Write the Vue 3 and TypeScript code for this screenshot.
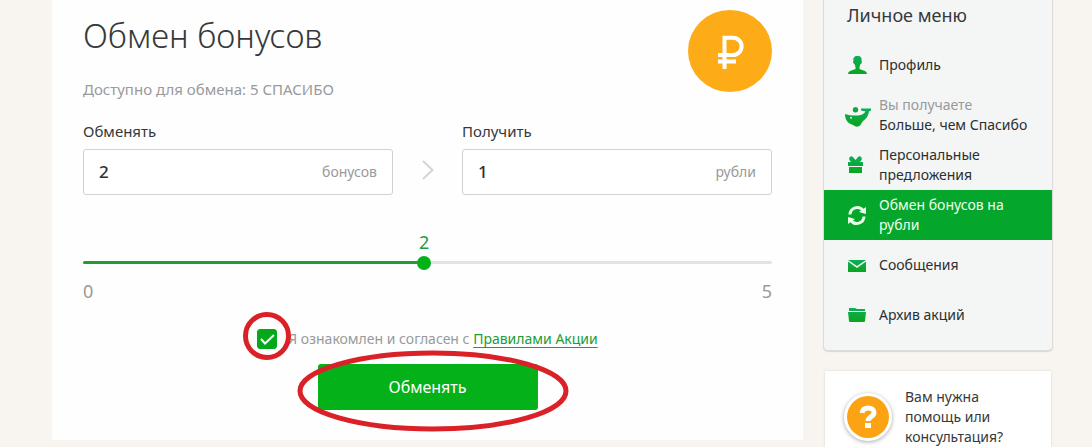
<script setup lang="ts">
import { computed, ref } from 'vue'

interface MenuItem {
  icon: 'profile' | 'whale' | 'gift' | 'exchange' | 'mail' | 'folder'
  label: string
  note?: string
  active?: boolean
}

const menu: MenuItem[] = [
  { icon: 'profile', label: 'Профиль' },
  { icon: 'whale', label: 'Больше, чем Спасибо', note: 'Вы получаете' },
  { icon: 'gift', label: 'Персональные предложения' },
  { icon: 'exchange', label: 'Обмен бонусов на рубли', active: true },
  { icon: 'mail', label: 'Сообщения' },
  { icon: 'folder', label: 'Архив акций' },
]

const available = 5
const position = ref(49.5)
const bonuses = computed(() => Math.floor((position.value / 100) * available))
const rubles = computed(() => Math.floor(bonuses.value / 2))
const agreed = ref(true)

const bubbleStyle = computed(() => ({ left: `${position.value}%` }))
const trackStyle = computed(() => ({
  background: `linear-gradient(to right, #219d35 ${position.value}%, #e3e3e3 ${position.value}%)`,
}))
</script>

<template>
  <div class="page">
    <main class="exchange">
      <header class="head">
        <div>
          <h1>Обмен бонусов</h1>
          <p class="available">Доступно для обмена: {{ available }} СПАСИБО</p>
        </div>
        <svg class="coin" viewBox="0 0 84 82" aria-hidden="true">
          <ellipse cx="42" cy="41" rx="42" ry="41" fill="#fdab17" />
          <path d="M36.500 59V27.700h8.500a8.300 8.300 0 0 1 0 17.300H30M30 51.500h18" fill="none" stroke="#fff" stroke-width="4" />
        </svg>
      </header>

      <form @submit.prevent>
        <div class="fields">
          <div class="field">
            <label for="give">Обменять</label>
            <div class="box">
              <input id="give" type="text" :value="bonuses" />
              <span>бонусов</span>
            </div>
          </div>
          <svg class="chevron" viewBox="0 0 12 20" aria-hidden="true">
            <path d="M1 1l9.500 9L1 19" fill="none" stroke="#d3d5d5" stroke-width="2" />
          </svg>
          <div class="field">
            <label for="receive">Получить</label>
            <div class="box">
              <input id="receive" type="text" :value="rubles" />
              <span>рубли</span>
            </div>
          </div>
        </div>

        <div class="slider">
          <div class="rail">
            <output class="bubble" for="amount" :style="bubbleStyle">{{ bonuses }}</output>
          </div>
          <input
            id="amount"
            v-model.number="position"
            type="range"
            min="0"
            max="100"
            step="0.5"
            aria-label="Количество бонусов"
            :style="trackStyle"
          />
          <div class="limits"><span>0</span><span>{{ available }}</span></div>
        </div>

        <div class="consent">
          <span class="tick">
            <input id="agree" v-model="agreed" type="checkbox" />
            <svg v-if="agreed" class="check" viewBox="0 0 20 20" aria-hidden="true">
              <path d="M4 10l4 4.500 9-8.500" fill="none" stroke="#fff" stroke-width="2" />
            </svg>
            <svg class="ring" viewBox="0 0 50 50" aria-hidden="true">
              <circle cx="25" cy="25" r="21.500" fill="none" stroke="#da2128" stroke-width="5" />
            </svg>
          </span>
          <span><label for="agree">Я ознакомлен и согласен с</label> <a href="#rules">Правилами Акции</a></span>
        </div>

        <div class="action">
          <button type="submit">Обменять</button>
          <svg class="oval" viewBox="0 0 274 84" aria-hidden="true">
            <ellipse cx="137" cy="42" rx="133" ry="38" fill="none" stroke="#da2128" stroke-width="5" />
          </svg>
        </div>
      </form>
    </main>

    <aside>
      <nav class="menu" aria-labelledby="menu-title">
        <h2 id="menu-title">Личное меню</h2>
        <ul>
          <li v-for="item in menu" :key="item.icon">
            <a href="#" :class="{ active: item.active }">
              <svg class="icon" viewBox="0 0 28 24" aria-hidden="true">
                <defs>
                  <linearGradient :id="`fill-${item.icon}`" x1="0" y1="0" x2="0" y2="1">
                    <stop offset="0" stop-color="#0cae5c" />
                    <stop offset="1" stop-color="#0aa51c" />
                  </linearGradient>
                </defs>
                <g :fill="item.active ? '#e6ffe6' : `url(#fill-${item.icon})`">
                  <path
                    v-if="item.icon === 'profile'"
                    d="M12.500 3C9 3 8 5 8.500 8c-1 .5 0 3 1 3l1 3v2L5 18Q3 19 3 21h19q0-2-2-3L14.500 16v-2l1-3c1 0 2-2.500 1-3 .5-3-.5-5-4-5z"
                  />
                  <template v-else-if="item.icon === 'whale'">
                    <path
                      fill-rule="evenodd"
                      d="M0 11q6 2 12 1.500Q18 12.500 20.500 8.500L16 7.500V5.500h10V7.500L24 8.500C23 14 20 17 18 18L15 22.500Q12 25 8 22C3 20.500 0 17 0 11zm6 2.700a1 1 0 1 0 .1 2 1 1 0 0 0-.1-2z"
                    />
                    <circle cx="10.500" cy="6.800" r="2.700" />
                  </template>
                  <path
                    v-else-if="item.icon === 'gift'"
                    d="M3 9h3.500C2 7 5 1.500 8 4l2.500 3L13 4c3-2.500 6 3 1.500 5H18v4H3zM4 14h13v6H4z"
                  />
                  <g
                    v-else-if="item.icon === 'exchange'"
                    fill="none"
                    stroke="#e6ffe6"
                    stroke-width="3"
                  >
                    <path d="M5 11.500a7.200 7.200 0 0 1 13-4M19 13.500a7.200 7.200 0 0 1-13 4" />
                    <path d="M21 4v7l-7-2zM3 21v-7l7 2z" fill="#e6ffe6" stroke="none" />
                  </g>
                  <path v-else-if="item.icon === 'mail'" d="M3 7h18l-9 6zM3 8.500l9 6.500 9-6.500V19H3z" />
                  <path v-else d="M4 5h6l2 1h8v2H4zM3 9h18l-1 9q0 1-1 1H5q-1 0-1-1z" />
                </g>
              </svg>
              <span class="text"><small v-if="item.note">{{ item.note }}</small>{{ item.label }}</span>
            </a>
          </li>
        </ul>
      </nav>

      <section class="help">
        <svg class="question" viewBox="0 0 52 52" aria-hidden="true">
          <circle cx="26" cy="26" r="24" fill="#fff" />
          <circle cx="26" cy="26" r="21" fill="#fba312" />
          <path
            d="M20 22c.5-7 12-6.500 12-.5 0 4.500-6 4-6 8.500"
            fill="none"
            stroke="#fff"
            stroke-width="5"
          />
          <path d="M23 32h6v5h-6z" fill="#fff" />
        </svg>
        <p>Вам нужна помощь или консультация?</p>
      </section>
    </aside>
  </div>
</template>

<style>
body {
  margin: 0;
  background: #f8f5f0;
}
</style>

<style scoped>
.page {
  box-sizing: border-box;
  display: flex;
  align-items: flex-start;
  gap: 20px;
  height: 100vh;
  overflow: hidden;
  padding: 0 39px 0 52px;
  background: #f8f5f0;
  color: #35393b;
  font-family: 'Noto Sans', 'Open Sans', sans-serif;
  font-size: 14px;
  line-height: 20px;
}

.exchange {
  box-sizing: border-box;
  flex: 1;
  min-width: 0;
  padding: 10px 31px 30px;
  background: #fefefe;
}

.head {
  display: flex;
  justify-content: space-between;
}

h1 {
  margin: 0;
  padding-top: 6px;
  font-size: 33px;
  font-weight: 350;
  line-height: 40px;
}

.available {
  margin: 23px 0 0;
  color: #989a9b;
  font-size: 15px;
}

.coin {
  width: 84px;
  height: 82px;
}

.fields {
  display: flex;
  align-items: flex-end;
  justify-content: space-between;
  margin-top: 22px;
}

.field {
  flex: 0 1 310px;
  min-width: 0;
}

.field label {
  display: block;
  margin-bottom: 8px;
  font-size: 15px;
}

.box {
  box-sizing: border-box;
  display: flex;
  align-items: center;
  height: 46px;
  padding: 0 15px;
  border: 1px solid #d0d2d2;
  border-radius: 3px;
  background: #fff;
  color: #989a9b;
}

.box input {
  flex: 1;
  min-width: 0;
  padding: 0;
  border: 0;
  outline: 0;
  background: none;
  color: #2b2f31;
  font: 500 17px/24px 'Noto Sans', sans-serif;
}

.chevron {
  width: 12px;
  height: 20px;
  margin-bottom: 15px;
}

.slider {
  margin-top: 35px;
}

.rail {
  position: relative;
  height: 24px;
  margin: 0 7px;
}

.bubble {
  position: absolute;
  top: 0;
  transform: translateX(-50%);
  color: #219d35;
  font-size: 18px;
  line-height: 24px;
}

.slider input {
  display: block;
  appearance: none;
  width: 100%;
  height: 3px;
  margin: 7px 0 0;
  border-radius: 2px;
}

.slider input::-webkit-slider-thumb {
  appearance: none;
  width: 14px;
  height: 14px;
  border-radius: 50%;
  background: #05b118;
}

.limits {
  display: flex;
  justify-content: space-between;
  margin-top: 15px;
  color: #989a9b;
  font-size: 18px;
  line-height: 24px;
}

.consent {
  display: flex;
  align-items: center;
  justify-content: center;
  gap: 11px;
  margin-top: 26px;
  color: #989a9b;
}

.tick {
  position: relative;
  width: 20px;
  height: 20px;
}

.tick input {
  display: block;
  appearance: none;
  width: 20px;
  height: 20px;
  margin: 0;
  border: 1px solid #05a81a;
  border-radius: 3px;
}

.tick input:checked {
  background: #05a81a;
}

.check {
  position: absolute;
  inset: 0;
  pointer-events: none;
}

.ring {
  position: absolute;
  top: -18px;
  left: -15px;
  width: 50px;
  height: 50px;
  pointer-events: none;
}

.consent a {
  color: #219d35;
  text-underline-offset: 3px;
}

.action {
  position: relative;
  width: 220px;
  margin: 15px auto 0;
}

.action button {
  display: block;
  width: 100%;
  height: 46px;
  padding: 0;
  border: 0;
  border-radius: 3px;
  background: #05b118;
  color: #fff;
  font: 400 16px/24px 'Noto Sans', sans-serif;
}

.oval {
  position: absolute;
  top: -15px;
  left: -22px;
  width: 274px;
  height: 84px;
  pointer-events: none;
}

aside {
  flex: 0 0 230px;
}

.menu {
  padding-bottom: 10px;
  border: 1px solid #dcdcda;
  border-top: 0;
  border-radius: 0 0 5px 5px;
  background: #f4f5f5;
  box-shadow: 0 1px 1px #d9d8d5;
}

h2 {
  margin: 0;
  padding: 3px 23px 13px;
  font-size: 18px;
  font-weight: 400;
  line-height: 24px;
}

ul {
  margin: 0;
  padding: 0;
  list-style: none;
}

.menu a {
  display: flex;
  align-items: center;
  gap: 6px;
  min-height: 50px;
  padding: 0 20px 0 21px;
  color: #2b2f31;
  text-decoration: none;
}

.menu a.active {
  background: #05a62c;
  color: #f0fff0;
}

.icon {
  flex: none;
  width: 28px;
  height: 24px;
}

.text small {
  display: block;
  color: #989a9b;
  font-size: 14px;
}

.help {
  display: flex;
  align-items: flex-start;
  gap: 11px;
  margin: 20px 2px 0;
  padding: 16px 17px;
  background: #fff;
  box-shadow: 0 0 2px #d5d2cd;
}

.question {
  flex: none;
  width: 52px;
  height: 52px;
  margin-top: 4px;
  filter: drop-shadow(0 1px 2px #aaa);
}

.help p {
  margin: 0;
}
</style>
